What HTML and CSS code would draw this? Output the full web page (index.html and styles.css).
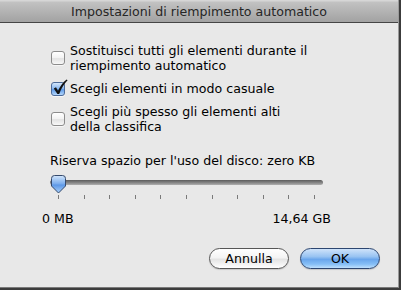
FILE: index.html
```html
<!DOCTYPE html>
<html lang="it">
<head>
<meta charset="utf-8">
<title>Impostazioni di riempimento automatico</title>
<link rel="stylesheet" href="styles.css">
</head>
<body>
<div class="window">
  <div class="titlebar">Impostazioni di riempimento automatico</div>
  <div class="content">
    <div class="options">
      <label class="check">
        <span class="box"></span>
        <span class="text">Sostituisci tutti gli elementi durante il<br>riempimento automatico</span>
      </label>
      <label class="check">
        <span class="box checked">
          <svg class="tick" width="17" height="17" viewBox="0 0 17 17"><path d="M1.8 9.4 L4 8.2 L6 11.8 C8.2 7 10.8 3.4 14.6 0.4 L15.6 1.3 C12.2 4.8 9.4 9.2 7.2 15 L5.4 15 Z" fill="#111"/></svg>
        </span>
        <span class="text">Scegli elementi in modo casuale</span>
      </label>
      <label class="check">
        <span class="box"></span>
        <span class="text">Scegli più spesso gli elementi alti<br>della classifica</span>
      </label>
    </div>
    <div class="slider-label">Riserva spazio per l'uso del disco: zero KB</div>
    <div class="slider">
      <div class="track"></div>
      <svg class="thumb" width="17" height="19" viewBox="0 0 17 19">
        <defs>
          <linearGradient id="tg" x1="0" y1="0" x2="0" y2="1">
            <stop offset="0" stop-color="#d3e6fb"/>
            <stop offset="0.45" stop-color="#7fb0ee"/>
            <stop offset="0.55" stop-color="#5d98e6"/>
            <stop offset="1" stop-color="#a9d0fa"/>
          </linearGradient>
        </defs>
        <path d="M1.5 3.5 Q1.5 0.5 4.5 0.5 H12.5 Q15.5 0.5 15.5 3.5 V11 L8.5 18 L1.5 11 Z" fill="url(#tg)" stroke="#34496b" stroke-width="1"/>
      </svg>
      <div class="ticks">
        <span></span><span></span><span></span><span></span><span></span><span></span><span></span><span></span><span></span><span></span><span></span>
      </div>
    </div>
    <div class="range">
      <span>0 MB</span>
      <span>14,64 GB</span>
    </div>
    <div class="buttons">
      <button class="btn">Annulla</button>
      <button class="btn default">OK</button>
    </div>
  </div>
</div>
</body>
</html>
```
FILE: styles.css
```css
html, body {
  margin: 0;
  padding: 0;
}
body {
  width: 401px;
  height: 290px;
  background: #3c3c3c;
  font-family: "DejaVu Sans", "Liberation Sans", sans-serif;
  font-size: 12.6px;
  color: #000;
  overflow: hidden;
}
.window {
  width: 398px;
  height: 287px;
  background: #e8e8e8;
  border-right: 1px solid #9a9a9a;
  border-bottom: 1px solid #7a7a7a;
  display: flex;
  flex-direction: column;
}
.titlebar {
  box-sizing: border-box;
  height: 23px;
  padding-top: 1px;
  line-height: 21px;
  text-align: center;
  color: #262626;
  background: linear-gradient(#d6d6d6 0, #d6d6d6 1px, #c2c2c2 2px, #a2a2a2 100%);
  border-bottom: 1px solid #454545;
}
.content {
  flex: 1;
  display: flex;
  flex-direction: column;
  padding-top: 20px;
}
.options {
  display: flex;
  flex-direction: column;
  gap: 8px;
  margin-left: 51px;
}
.check {
  display: flex;
  align-items: center;
  gap: 5px;
  line-height: 15px;
}
.box {
  position: relative;
  width: 14px;
  height: 14px;
  box-sizing: border-box;
  border: 1px solid #8c8c8c;
  border-radius: 3px;
  background: linear-gradient(#ffffff, #f2f2f2 50%, #e2e2e2 55%, #f8f8f8);
  box-shadow: 0 1px 0 rgba(255,255,255,0.6);
  flex: none;
}
.box.checked {
  border-color: #4c6a99;
  background: linear-gradient(#d4e6fb, #86b6ef 48%, #5f9be8 55%, #b3d6fb);
}
.tick {
  position: absolute;
  left: 0;
  top: -4px;
}
.slider-label {
  margin-top: 19px;
  margin-left: 50px;
  line-height: 15px;
}
.slider {
  position: relative;
  margin-left: 50px;
  width: 273px;
  height: 28px;
  margin-top: 4px;
}
.track {
  position: absolute;
  left: 0;
  right: 0;
  top: 8px;
  height: 5px;
  border-radius: 3px;
  background: linear-gradient(#5c5c5c, #8a8a8a 60%, #b0b0b0);
}
.thumb {
  position: absolute;
  left: 0;
  top: 3px;
}
.ticks {
  position: absolute;
  left: 8px;
  right: 8px;
  top: 23px;
  display: flex;
  justify-content: space-between;
}
.ticks span {
  width: 1px;
  height: 4px;
  background: #7a7a7a;
}
.range {
  margin-top: 11px;
  margin-left: 42px;
  width: 289px;
  display: flex;
  justify-content: space-between;
  line-height: 15px;
}
.buttons {
  margin-top: auto;
  margin-bottom: 18px;
  margin-right: 18px;
  display: flex;
  justify-content: flex-end;
  gap: 11px;
}
.btn {
  width: 80px;
  height: 21px;
  padding: 0;
  font-family: inherit;
  font-size: 12.6px;
  color: #000;
  border: 1px solid #565656;
  border-radius: 11px;
  background: linear-gradient(#ffffff, #f4f4f4 45%, #e4e4e4 55%, #f6f6f6 85%, #ffffff);
  box-shadow: 0 1px 1px rgba(0,0,0,0.15);
}
.btn.default {
  border-color: #2d4670;
  background: linear-gradient(#cfe3fa, #98c3f2 40%, #6aa6ec 55%, #86bff6 80%, #bfe0fd);
}
```
